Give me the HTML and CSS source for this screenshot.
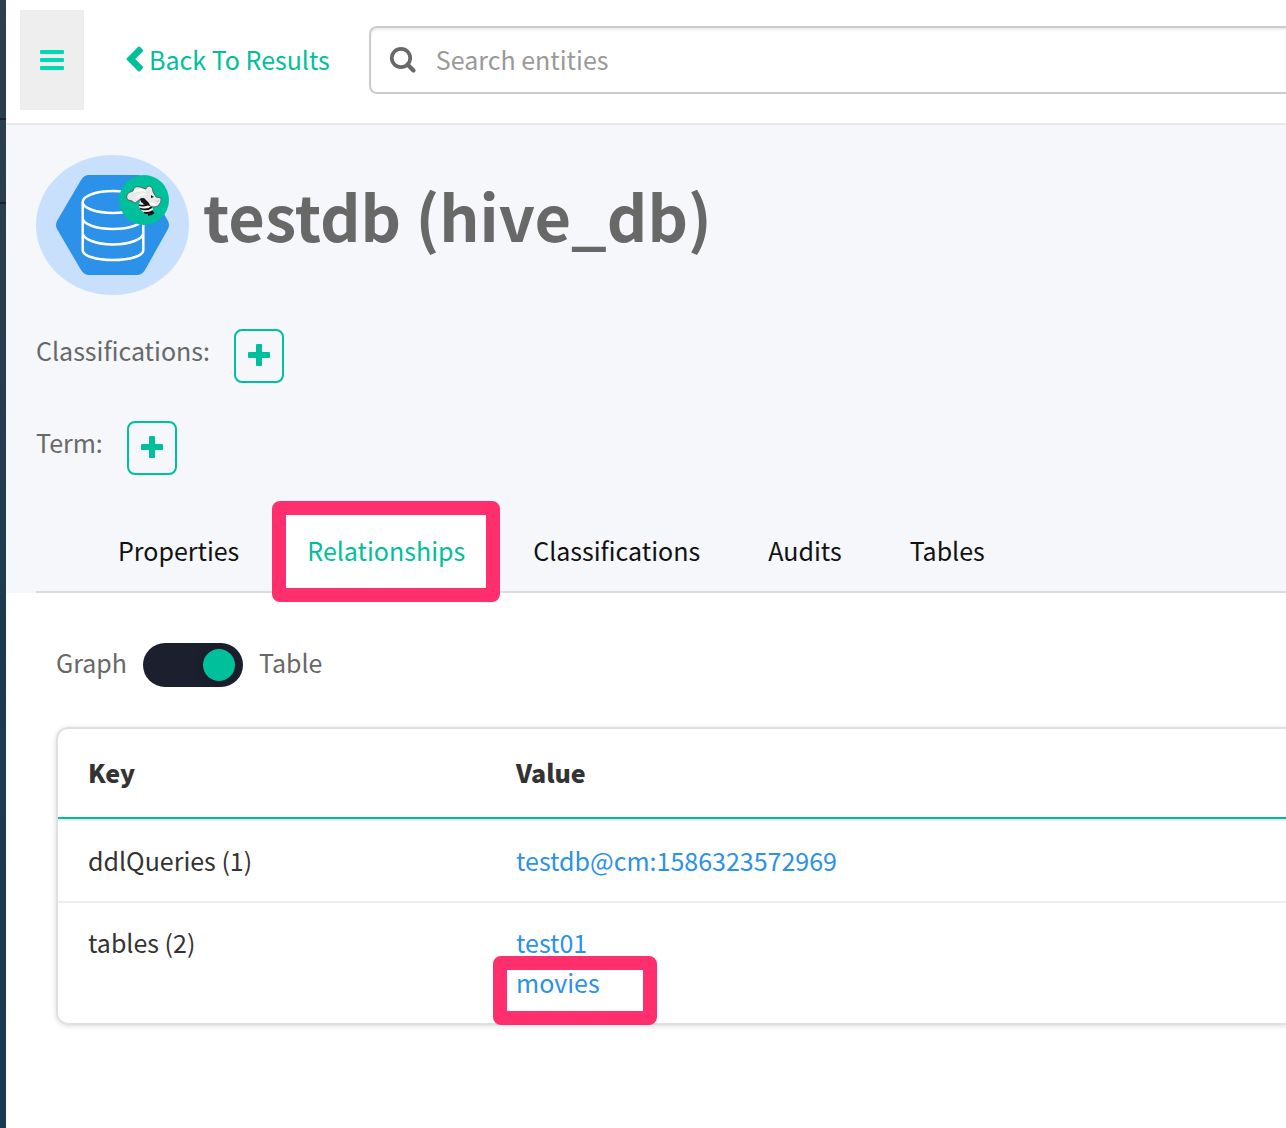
FILE: index.html
```html
<!DOCTYPE html>
<html lang="en">
<head>
<meta charset="utf-8">
<title>testdb (hive_db)</title>
<link rel="stylesheet" href="styles.css">
</head>
<body>
<div class="app">
  <aside class="sidebar"></aside>
  <main class="main">
    <header class="topbar">
      <button class="menu-button" type="button" aria-label="Toggle menu">
        <svg width="24" height="20" viewBox="0 0 24 20" fill="currentColor"><rect width="24" height="4" rx="1"/><rect y="8" width="24" height="4" rx="1"/><rect y="16" width="24" height="4" rx="1"/></svg>
      </button>
      <a class="back-link" href="#">
        <svg width="18" height="26" viewBox="0 0 18 26" fill="currentColor"><path d="M12.2.8Q13 0 13.8.8L16.8 3.800Q17.600 4.600 16.800 5.400L9.200 13L16.800 20.600Q17.600 21.400 16.800 22.200L13.800 25.200Q13 26 12.200 25.200L.8 13.800Q0 13 .8 12.200Z"/></svg>
        <span>Back To Results</span>
      </a>
      <label class="search">
        <svg width="28" height="28" viewBox="0 0 28 28" fill="none" stroke="currentColor"><circle cx="12" cy="12" r="9.200" stroke-width="3.700"/><path d="M18.500 18.500L24.500 24.500" stroke-width="4.200" stroke-linecap="round"/></svg>
        <input class="search-input" type="text" placeholder="Search entities" aria-label="Search entities">
      </label>
    </header>
    <section class="entity">
      <div class="entity-title">
        <svg class="entity-icon" width="153" height="140" viewBox="0 0 153 140">
          <ellipse cx="76.500" cy="70" rx="76.500" ry="70" fill="#c9e0fd"/>
          <path d="M53 20H101Q106 20 109 25L132 66Q134 70 132 74L109 115Q106 120 101 120H53Q48 120 45 115L21 74Q19 70 21 66L45 25Q48 20 53 20Z" fill="#2b91e9"/>
          <g fill="none" stroke="#fff" stroke-width="2.500">
            <ellipse cx="77" cy="47" rx="30.300" ry="11"/>
            <path d="M46.700 47V95C46.700 101 60 105 77 105S107.300 101 107.300 95V47M46.700 63C46.700 69 60 74 77 74S107.300 69 107.300 63M46.700 78C46.700 84 60 89.500 77 89.500S107.300 84 107.300 78"/>
          </g>
          <circle cx="108" cy="45" r="25" fill="#00bf9b"/>
          <path d="M105 44L115 49Q118 54 116 59Q113 60 109 58Q102 54 103 49Z" fill="#f4f4f4"/>
          <path d="M103 50Q109 52 113 48M104 53.500Q111 56 116 52M108 57.500Q113 59 117 56M112 60Q115 60 118 57.500" fill="none" stroke="#111" stroke-width="1.800"/>
          <path d="M91 40Q92 37 97 36L98 33Q100 31 104 32L110 34Q110 31 114 31Q117 33 117 37L120 42L125 43Q126 47 122 51Q118 53 114 51L109 45Q106 42 103 45L99 48Q96 45 92 45Q90 43 91 40Z" fill="#e9e9e9" stroke="#444" stroke-width=".7"/>
          <path d="M98 37Q103 34 109 36M100 43Q104 39 110 39M113 48L120 50" fill="none" stroke="#fff" stroke-width="1.800"/>
          <path d="M104 43.500L108 43L113 48L114 51L109 50L105 47ZM115 40L118 42L115 43ZM119 45.500Q122 47.500 124 44.500L122 46.500Z" fill="#171717"/>
        </svg>
        <h1 class="entity-name">testdb (hive_db)</h1>
      </div>
      <div class="meta-row">
        <span>Classifications:</span>
        <button class="add-button" type="button" aria-label="Add classification"><svg width="22" height="22" viewBox="0 0 22 22" fill="currentColor"><rect x="8" width="6" height="22" rx="1"/><rect y="8" width="22" height="6" rx="1"/></svg></button>
      </div>
      <div class="meta-row">
        <span>Term:</span>
        <button class="add-button" type="button" aria-label="Add term"><svg width="22" height="22" viewBox="0 0 22 22" fill="currentColor"><rect x="8" width="6" height="22" rx="1"/><rect y="8" width="22" height="6" rx="1"/></svg></button>
      </div>
      <nav class="tabs">
        <a class="tab" href="#">Properties</a>
        <a class="tab tab-active" href="#">Relationships</a>
        <a class="tab" href="#">Classifications</a>
        <a class="tab" href="#">Audits</a>
        <a class="tab" href="#">Tables</a>
      </nav>
    </section>
    <section class="panel">
      <div class="view-switch">
        <label for="view">Graph</label>
        <input class="switch" id="view" type="checkbox" checked>
        <label for="view">Table</label>
      </div>
      <div class="card">
        <table class="relations">
          <thead>
            <tr><th class="key-column" scope="col">Key</th><th scope="col">Value</th></tr>
          </thead>
          <tbody>
            <tr><td>ddlQueries (1)</td><td><a class="entity-link" href="#">testdb@cm:1586323572969</a></td></tr>
            <tr><td>tables (2)</td><td><a class="entity-link" href="#">test01</a><a class="entity-link marked" href="#">movies</a></td></tr>
          </tbody>
        </table>
      </div>
    </section>
  </main>
</div>
</body>
</html>
```
FILE: styles.css
```css
*,
*::before,
*::after {
  box-sizing: border-box;
}

body {
  margin: 0;
  background: #fff;
  color: #686868;
  font-family: "Noto Sans CJK SC", "Noto Sans", sans-serif;
  font-size: 25px;
  line-height: 40px;
}

a {
  text-decoration: none;
}

svg {
  display: block;
  flex: none;
}

button {
  padding: 0;
  display: flex;
  align-items: center;
  justify-content: center;
}

.app {
  display: flex;
  min-height: 100vh;
}

.sidebar {
  flex: none;
  width: 6px;
  background:
    linear-gradient(#1c2030, #1c2030) 0 118px / 100% 2px no-repeat,
    linear-gradient(#1c2030, #1c2030) 0 202px / 100% 2px no-repeat,
    linear-gradient(#2d3e4e, #263e4c 320px, #243b52 480px, #1d3b4f 600px, #1b3a54);
}

.main {
  flex: 1;
  min-width: 0;
}

.topbar {
  display: flex;
  align-items: center;
  padding: 10px 0 13px 14px;
  border-bottom: 2px solid #e6e8ed;
}

.menu-button {
  width: 64px;
  height: 100px;
  border: 0;
  background: #eee;
  color: #00d9b1;
}

.back-link {
  display: flex;
  align-items: center;
  gap: 5px;
  margin: 0 39px 0 42px;
  padding-bottom: 2px;
  color: #00bf9b;
  white-space: nowrap;
}

.search {
  flex: 1;
  display: flex;
  align-items: center;
  gap: 19px;
  height: 68px;
  padding-left: 18px;
  border: 2px solid #ccc;
  border-right: 0;
  border-radius: 8px 0 0 8px;
  box-shadow: inset 0 2px 2px #00000013;
}

.search-input {
  flex: 1;
  min-width: 0;
  height: 40px;
  padding: 0 0 2px;
  border: 0;
  outline: 0;
  background: transparent;
  font: inherit;
  color: #555;
}

.search-input::placeholder {
  color: #999;
}

.entity {
  padding: 30px 0 0 30px;
  background: #f5f7fb;
}

.entity-title {
  display: flex;
  gap: 14px;
  margin-bottom: 34px;
}

.entity-name {
  margin: 0;
  font-size: 63px;
  line-height: 120px;
  font-weight: 700;
}

.meta-row {
  display: flex;
  gap: 24px;
  margin-bottom: 38px;
}

.meta-row span {
  padding-top: 1px;
}

.add-button {
  width: 50px;
  height: 54px;
  padding-bottom: 2px;
  border: 2px solid #00bf9b;
  border-radius: 8px;
  background: transparent;
  color: #00bf9b;
}

.tabs {
  display: flex;
  padding-left: 48px;
  border-bottom: 2px solid #dadbdf;
}

.tab {
  padding: 17px 34px 21px;
  color: #111;
}

.tab-active {
  position: relative;
  background: #fff;
  color: #00bf9b;
}

.tab-active::after {
  content: "";
  position: absolute;
  inset: -12px -1px -11px;
  border: 14px solid #ff2e6c;
  border-radius: 8px;
}

.panel {
  padding: 50px 0 50px 50px;
}

.view-switch {
  display: flex;
  gap: 16px;
  margin-bottom: 40px;
}

.view-switch label {
  line-height: 38px;
}

.switch {
  appearance: none;
  display: flex;
  justify-content: flex-end;
  width: 100px;
  height: 44px;
  margin: 0;
  padding: 6px 8px;
  border-radius: 22px;
  background: #1c1f2d;
}

.switch::before {
  content: "";
  width: 32px;
  height: 32px;
  border-radius: 50%;
  background: #00bf9b;
  box-shadow: 0 0 8px #00000040;
}

.switch:not(:checked) {
  justify-content: flex-start;
}

.card {
  border: 2px solid #e0e0e0;
  border-right: 0;
  border-radius: 12px 0 0 12px;
  box-shadow: 0 1px 5px #00000026;
}

.relations {
  width: 100%;
  border-spacing: 0;
  table-layout: fixed;
  color: #333;
}

.relations th {
  padding: 23px 30px 25px;
  border-bottom: 2px solid #00bf9b;
  text-align: left;
  font-weight: 900;
}

.relations td {
  padding: 19px 30px 21px;
  border-top: 2px solid #eee;
  vertical-align: top;
}

.key-column {
  width: 428px;
}

.entity-link {
  display: block;
  width: fit-content;
  color: #2b91e9;
}

.marked {
  position: relative;
}

.marked::after {
  content: "";
  position: absolute;
  top: -6px;
  left: -23px;
  width: 164px;
  height: 69px;
  border: 14px solid #ff2e6c;
  border-radius: 8px;
}
```
